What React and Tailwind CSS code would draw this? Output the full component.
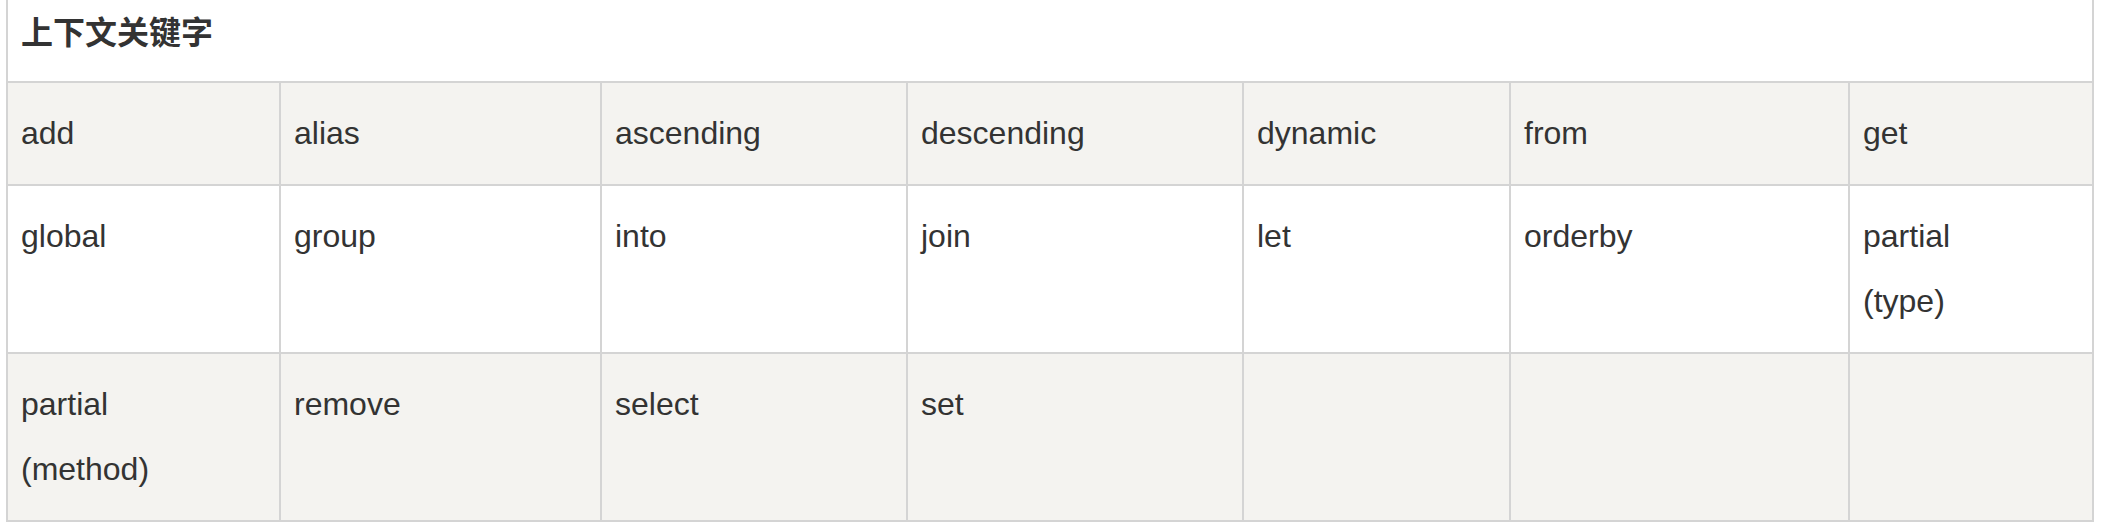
import React from "react";

const widths = ["w-[273px]", "w-[321px]", "w-[306px]", "w-[336px]", "w-[267px]", "w-[339px]"];

const rows = [
  ["add", "alias", "ascending", "descending", "dynamic", "from", "get"],
  ["global", "group", "into", "join", "let", "orderby", ["partial", "(type)"]],
  [["partial", "(method)"], "remove", "select", "set", "", "", ""],
];

const Cell = ({ value, index }) => {
  const lines = Array.isArray(value) ? value : [value];
  const isLast = index === 6;
  return (
    <div
      className={
        isLast
          ? "flex-1 px-[13px] py-[18px]"
          : `${widths[index]} shrink-0 border-r-2 border-[#d4d4d4] px-[13px] py-[18px]`
      }
    >
      {lines.map((line, i) => (
        <div key={i} className="min-h-[65px]">
          {line}
        </div>
      ))}
    </div>
  );
};

const App = () => {
  return (
    <div
      className="min-h-screen bg-white text-[#333333]"
      style={{ fontFamily: '"Liberation Sans", Arial, "Noto Sans CJK SC", sans-serif' }}
    >
      <div className="ml-[6px] w-[2088px] border-x-2 border-b-2 border-[#d4d4d4]">
        {/* Title */}
        <div className="h-[83px] border-b-2 border-[#d4d4d4] pl-[13px] pt-[11px]">
          <h3 className="text-[32px] font-bold leading-[44px]">上下文关键字</h3>
        </div>

        {/* Keyword rows */}
        {rows.map((row, r) => (
          <div
            key={r}
            className={`flex text-[32px] leading-[65px] ${
              r % 2 === 0 ? "bg-[#f4f3f0]" : "bg-white"
            } ${r < rows.length - 1 ? "border-b-2 border-[#d4d4d4]" : ""}`}
          >
            {row.map((value, i) => (
              <Cell key={i} value={value} index={i} />
            ))}
          </div>
        ))}
      </div>
    </div>
  );
};

export default App;
